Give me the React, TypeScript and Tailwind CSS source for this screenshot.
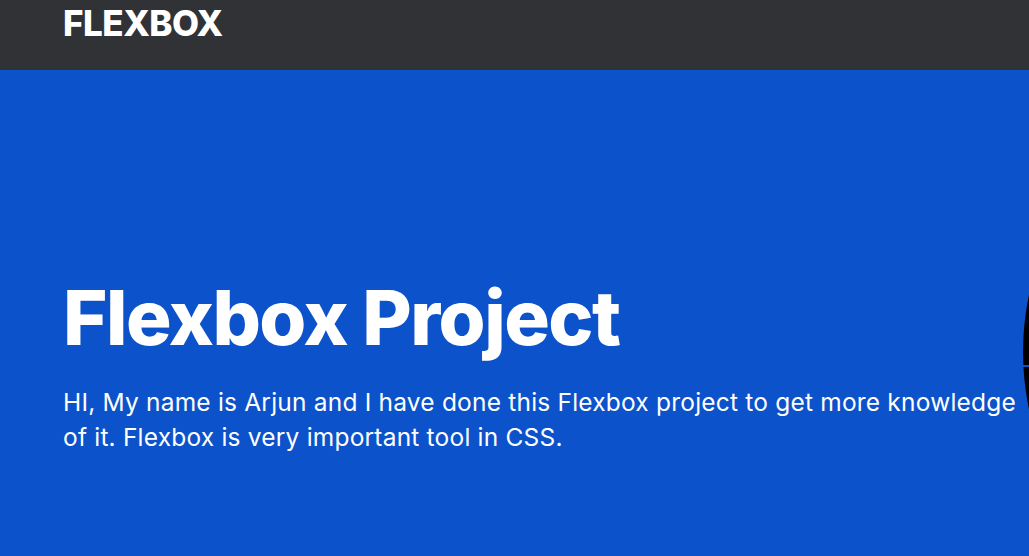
export default function App() {
  return (
    <div className="h-screen overflow-hidden bg-[#0b52cb] font-['Inter',sans-serif] text-white">
      <header className="h-[70px] bg-[#303236] px-[63px] pt-[3px]">
        <h1 className="text-[35px] font-extrabold leading-[40px] tracking-[-0.5px]">FLEXBOX</h1>
      </header>
      <section className="flex items-start pl-[63px]">
        <div className="mt-[207px] w-[962px] shrink-0">
          <h2 className="text-[76px] font-extrabold leading-[80px] tracking-[-1.5px]">Flexbox Project</h2>
          <p className="mt-[28px] text-[24.5px] leading-[35px] tracking-[0.2px]">
            HI, My name is Arjun and I have done this Flexbox project to get more knowledge of it. Flexbox is very important tool in CSS.
          </p>
        </div>
        <div className="relative -ml-[2px] mt-[7px] h-[550px] w-[550px] shrink-0 rounded-full bg-black">
          <div className="absolute left-0 top-[288px] h-[2px] w-[40px] bg-[#0b52cb]" />
        </div>
      </section>
    </div>
  );
}
